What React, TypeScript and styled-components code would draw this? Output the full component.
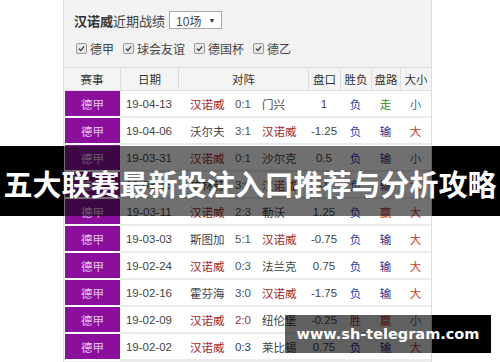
import React from "react";
import styled, { createGlobalStyle } from "styled-components";

const GlobalStyle = createGlobalStyle`
  html, body {
    margin: 0;
    padding: 0;
    background: #fff;
  }
  body {
    font-family: "Liberation Sans", "Noto Sans CJK SC", sans-serif;
  }
`;

const COLS = "56px 58px 130px 32px 31px 29px 31px";

interface Match {
  date: string;
  home: string;
  score: string;
  away: string;
  handicap: string;
  result: string;
  cover: string;
  total: string;
  scoreColor?: string;
}

const HOME = "汉诺威";

const matches: Match[] = [
  { date: "19-04-13", home: "汉诺威", score: "0:1", away: "门兴", handicap: "1", result: "负", cover: "走", total: "小" },
  { date: "19-04-06", home: "沃尔夫", score: "3:1", away: "汉诺威", handicap: "-1.25", result: "负", cover: "输", total: "大" },
  { date: "19-03-31", home: "汉诺威", score: "0:1", away: "沙尔克", handicap: "0.5", result: "负", cover: "输", total: "小" },
  { date: "19-03-16", home: "柏林赫", score: "3:0", away: "汉诺威", handicap: "-1", result: "负", cover: "输", total: "大" },
  { date: "19-03-11", home: "汉诺威", score: "2:3", away: "勒沃", handicap: "1.25", result: "负", cover: "赢", total: "大" },
  { date: "19-03-03", home: "斯图加", score: "5:1", away: "汉诺威", handicap: "-0.75", result: "负", cover: "输", total: "大" },
  { date: "19-02-24", home: "汉诺威", score: "0:3", away: "法兰克", handicap: "0.75", result: "负", cover: "输", total: "大", scoreColor: "#4a5270" },
  { date: "19-02-16", home: "霍芬海", score: "3:0", away: "汉诺威", handicap: "-1.75", result: "负", cover: "输", total: "大", scoreColor: "#3d4a8a" },
  { date: "19-02-09", home: "汉诺威", score: "2:0", away: "纽伦堡", handicap: "-0.25", result: "胜", cover: "赢", total: "小", scoreColor: "#9a3050" },
  { date: "19-02-02", home: "汉诺威", score: "0:3", away: "莱比锡", handicap: "0.75", result: "负", cover: "输", total: "大", scoreColor: "#2c3a80" },
];

const markColor: Record<string, string> = {
  负: "#3446a8",
  胜: "#c8262a",
  走: "#2a8c2a",
  输: "#25308a",
  赢: "#c02a2a",
  小: "#3a6aa8",
  大: "#d03a22",
};

const Page = styled.div`
  position: relative;
  width: 500px;
  height: 362px;
  overflow: hidden;
  padding-left: 63px;
  box-sizing: border-box;
  background: #fff;
`;

const Panel = styled.div`
  width: 369px;
  height: 362px;
  box-sizing: border-box;
  background: #f2f2f2;
  border-left: 1px solid #dcdcdc;
  border-right: 1px solid #dcdcdc;
`;

const TitleRow = styled.div`
  height: 40px;
  display: flex;
  align-items: center;
  padding-left: 10px;
  font-size: 13px;
  color: #444;
`;

const TeamName = styled.span`
  font-weight: 700;
  color: #333;
`;

const Select = styled.span`
  display: inline-flex;
  align-items: center;
  gap: 7px;
  height: 16px;
  margin-left: 4px;
  padding: 0 6px;
  border: 1px solid #a8a8a8;
  background: #fff;
  font-size: 12px;
  color: #444;
`;

const Arrow = styled.span`
  font-size: 7px;
  color: #333;
`;

const FilterRow = styled.div`
  height: 16px;
  margin-bottom: 11px;
  display: flex;
  align-items: center;
  gap: 9px;
  padding-left: 12px;
  font-size: 12px;
  color: #444;
`;

const Filter = styled.label`
  display: flex;
  align-items: center;
  gap: 3px;
`;

const Box = styled.span`
  width: 9px;
  height: 9px;
  border: 1px solid #9a9a9a;
  border-radius: 2px;
  background: #e8e8e8;
  display: flex;
  align-items: center;
  justify-content: center;
`;

const Grid = styled.div`
  display: grid;
  grid-template-columns: ${COLS};
`;

const HeadRow = styled(Grid)`
  height: 24px;
  box-sizing: border-box;
  border-top: 1px solid #dedede;
  border-bottom: 1px solid #dedede;
  background: #f4f4f4;
`;

const HeadCell = styled.div<{ $first?: boolean }>`
  display: flex;
  align-items: center;
  justify-content: center;
  font-size: 11.5px;
  color: #333;
  border-left: ${(p) => (p.$first ? "none" : "1px solid #dedede")};
`;

const Row = styled(Grid)`
  height: 27px;
  background: #fff;
`;

const Cell = styled.div<{ $color?: string }>`
  display: flex;
  align-items: center;
  justify-content: center;
  font-size: 11.5px;
  color: ${(p) => p.$color || "#444"};
  border-bottom: 2px solid #ebebeb;
`;

const League = styled(Cell)`
  margin-left: 1px;
  background: #8c0e9c;
  color: #e6c4ec;
  border-bottom-color: #fff;
`;

const MatchCell = styled.div`
  display: grid;
  grid-template-columns: 45px 27px 1fr;
  align-items: center;
  padding-left: 12px;
  font-size: 11.5px;
  border-bottom: 2px solid #ebebeb;
`;

const Team = styled.span<{ $home: boolean }>`
  color: ${(p) => (p.$home ? "#a42828" : "#444")};
  white-space: nowrap;
`;

const Score = styled.span<{ $color?: string }>`
  color: ${(p) => p.$color || "#555"};
`;

const Banner = styled.div`
  position: absolute;
  left: 0;
  top: 146px;
  width: 500px;
  height: 70px;
  display: flex;
  align-items: center;
  justify-content: center;
  padding-top: 4px;
  box-sizing: border-box;
  background: linear-gradient(
    to right,
    #000 0 64px,
    rgba(0, 0, 0, 0.56) 64px 432px,
    #000 432px
  );
  font-family: "Noto Sans CJK SC", sans-serif;
  font-weight: 700;
  font-size: 29px;
  line-height: 1;
  color: #fff;
  white-space: nowrap;
`;

const Watermark = styled.div`
  position: absolute;
  left: 285px;
  top: 315px;
  width: 206px;
  height: 38px;
  display: flex;
  align-items: center;
  justify-content: center;
  background: linear-gradient(
    to right,
    rgba(0, 0, 0, 0.62) 0 147px,
    #000 147px
  );
  font-family: "DejaVu Sans", sans-serif;
  font-weight: 700;
  font-size: 14.5px;
  color: #fff;
  white-space: nowrap;
`;

const Check = () => (
  <Box>
    <svg width="7" height="7" viewBox="0 0 8 8">
      <path d="M1 4.2 L3.2 6.3 L7 1.6" fill="none" stroke="#333" strokeWidth="1.4" />
    </svg>
  </Box>
);

const filters = ["德甲", "球会友谊", "德国杯", "德乙"];
const heads = ["赛事", "日期", "对阵", "盘口", "胜负", "盘路", "大小"];

const App: React.FC = () => {
  return (
    <Page>
      <GlobalStyle />
      <Panel>
        <TitleRow>
          <TeamName>{HOME}</TeamName>近期战绩
          <Select>
            10场<Arrow>▼</Arrow>
          </Select>
        </TitleRow>
        <FilterRow>
          {filters.map((f) => (
            <Filter key={f}>
              <Check />
              {f}
            </Filter>
          ))}
        </FilterRow>
        <HeadRow>
          {heads.map((h, i) => (
            <HeadCell key={h} $first={i === 0}>
              {h}
            </HeadCell>
          ))}
        </HeadRow>
        {matches.map((m) => (
          <Row key={m.date}>
            <League>德甲</League>
            <Cell>{m.date}</Cell>
            <MatchCell>
              <Team $home={m.home === HOME}>{m.home}</Team>
              <Score $color={m.scoreColor}>{m.score}</Score>
              <Team $home={m.away === HOME}>{m.away}</Team>
            </MatchCell>
            <Cell>{m.handicap}</Cell>
            <Cell $color={markColor[m.result]}>{m.result}</Cell>
            <Cell $color={markColor[m.cover]}>{m.cover}</Cell>
            <Cell $color={markColor[m.total]}>{m.total}</Cell>
          </Row>
        ))}
      </Panel>
      <Banner>五大联赛最新投注入口推荐与分析攻略</Banner>
      <Watermark>www.sh-telegram.com</Watermark>
    </Page>
  );
};

export default App;
